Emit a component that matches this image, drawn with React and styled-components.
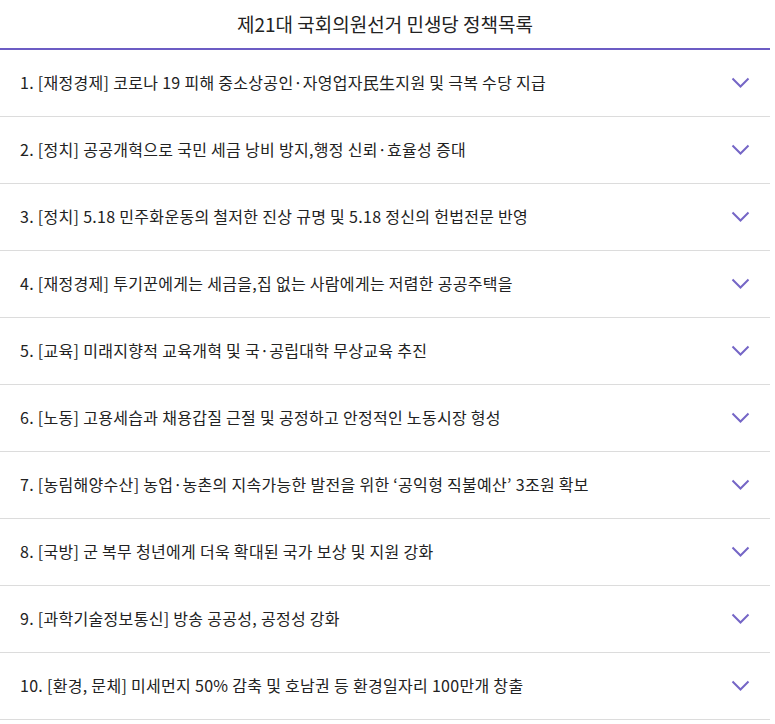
import React from "react";
import styled, { createGlobalStyle } from "styled-components";

const Global = createGlobalStyle`
  html, body { margin: 0; padding: 0; background: #fff; }
  body { font-family: "Noto Sans CJK KR", "Noto Sans", sans-serif; color: #222; }
`;

const Wrap = styled.div`
  width: 770px;
`;

const Header = styled.h1`
  margin: 0;
  height: 48px;
  display: flex;
  align-items: center;
  justify-content: center;
  font-size: 19px;
  font-weight: 400;
  color: #222;
  border-bottom: 2px solid #6c5cc4;
  letter-spacing: 0;
  padding-bottom: 2px;
  box-sizing: border-box;
  height: 50px;
`;

const List = styled.ul`
  list-style: none;
  margin: 0;
  padding: 0;
`;

const Row = styled.li`
  height: 66px;
  border-bottom: 1px solid #dcdcdc;
  display: flex;
  align-items: center;
  justify-content: space-between;
  padding: 0 20px;
  cursor: pointer;
`;

const Title = styled.span`
  font-size: 16px;
  color: #222;
  letter-spacing: 0.3px;
  padding-bottom: 2px;
`;

const Chevron = styled.svg`
  width: 19px;
  height: 12px;
  flex-shrink: 0;
`;

const items = [
  "1. [재정경제] 코로나 19 피해 중소상공인·자영업자民生지원 및 극복 수당 지급",
  "2. [정치] 공공개혁으로 국민 세금 낭비 방지,행정 신뢰·효율성 증대",
  "3. [정치] 5.18 민주화운동의 철저한 진상 규명 및 5.18 정신의 헌법전문 반영",
  "4. [재정경제] 투기꾼에게는 세금을,집 없는 사람에게는 저렴한 공공주택을",
  "5. [교육] 미래지향적 교육개혁 및 국·공립대학 무상교육 추진",
  "6. [노동] 고용세습과 채용갑질 근절 및 공정하고 안정적인 노동시장 형성",
  "7. [농림해양수산] 농업·농촌의 지속가능한 발전을 위한 ‘공익형 직불예산’ 3조원 확보",
  "8. [국방] 군 복무 청년에게 더욱 확대된 국가 보상 및 지원 강화",
  "9. [과학기술정보통신] 방송 공공성, 공정성 강화",
  "10. [환경, 문체] 미세먼지 50% 감축 및 호남권 등 환경일자리 100만개 창출",
];

export default function App() {
  return (
    <Wrap>
      <Global />
      <Header>제21대 국회의원선거 민생당 정책목록</Header>
      <List>
        {items.map((t) => (
          <Row key={t}>
            <Title>{t}</Title>
            <Chevron viewBox="0 0 19 12">
              <path d="M1.5 1.5 L9.5 9.5 L17.5 1.5" fill="none" stroke="#7566c6" strokeWidth="2" />
            </Chevron>
          </Row>
        ))}
      </List>
    </Wrap>
  );
}
